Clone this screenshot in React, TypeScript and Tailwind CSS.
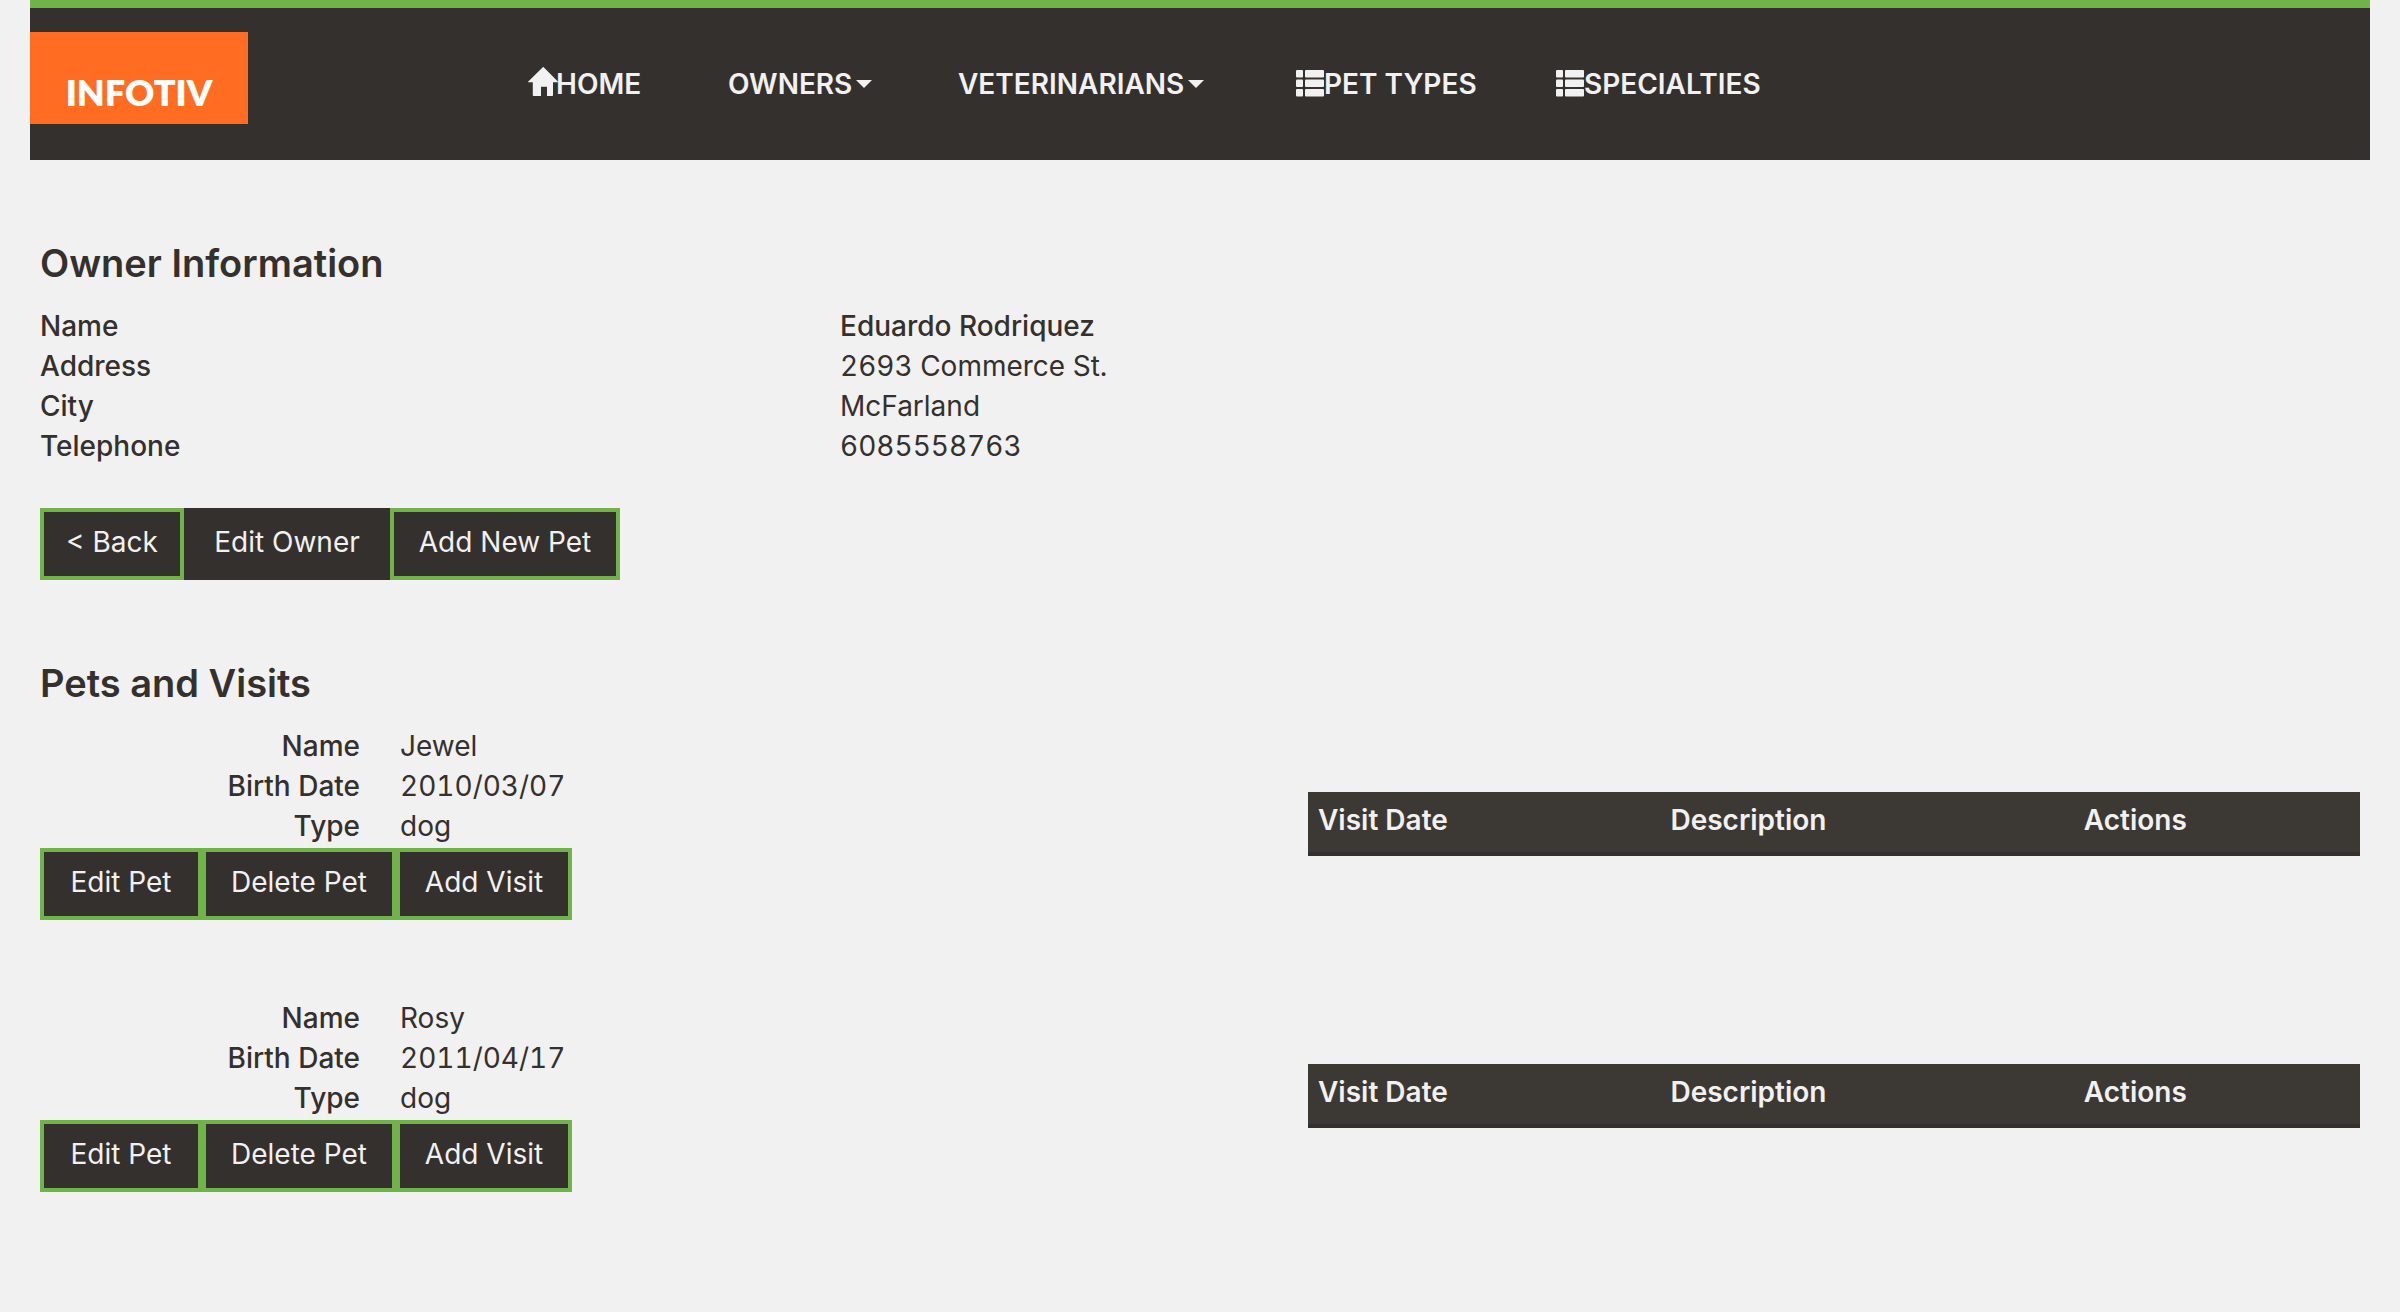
import type { ReactNode } from "react";

function HomeIcon() {
  return (
    <svg className="h-[34px] w-7 overflow-visible" viewBox="0 0 28 34" fill="currentColor" aria-hidden="true">
      <path d="M14.800.3c.3-.3.6-.3.900 0L29.800 14.400c.4.4.3.8-.3.800H25V28.300c0 .4-.3.700-.7.700H19V19.700H13V29H5.500c-.4 0-.7-.3-.7-.7V15.200H.6c-.6 0-.7-.4-.3-.8L14.800.3Z" />
    </svg>
  );
}

function ListIcon() {
  return (
    <svg className="h-7 w-7" viewBox="0 0 28 28" fill="currentColor" aria-hidden="true">
      {[0, 9.5, 19].map((y) => (
        <g key={y}>
          <rect x="0" y={y} width="7" height="7.5" rx="1" />
          <rect x="9" y={y} width="19" height="7.5" rx="1" />
        </g>
      ))}
    </svg>
  );
}

function Caret() {
  return (
    <svg className="ml-1 h-2 w-4" viewBox="0 0 16 8" fill="currentColor" aria-hidden="true">
      <path d="M0 0h16L8 8Z" />
    </svg>
  );
}

function NavLink({ icon, children }: { icon: ReactNode; children: ReactNode }) {
  return (
    <a href="#" className="flex items-center">
      {icon}
      {children}
    </a>
  );
}

function NavMenu({ children }: { children: ReactNode }) {
  return (
    <button type="button" className="flex items-center">
      {children}
      <Caret />
    </button>
  );
}

function Button({
  width,
  active = false,
  children,
}: {
  width: string;
  active?: boolean;
  children: ReactNode;
}) {
  return (
    <button
      type="button"
      className={
        "border-4 bg-[#34302d] pt-[10px] pb-[14px] text-[#f1f1f1] " +
        width +
        (active ? " border-[#34302d]" : " border-[#70b349]")
      }
    >
      {children}
    </button>
  );
}

const owner = [
  ["Name", "Eduardo Rodriquez"],
  ["Address", "2693 Commerce St."],
  ["City", "McFarland"],
  ["Telephone", "6085558763"],
];

const pets = [
  { name: "Jewel", birthDate: "2010/03/07", type: "dog" },
  { name: "Rosy", birthDate: "2011/04/17", type: "dog" },
];

function Pet({ name, birthDate, type }: { name: string; birthDate: string; type: string }) {
  const rows = [
    ["Name", name],
    ["Birth Date", birthDate],
    ["Type", type],
  ];
  return (
    <article className="grid grid-cols-[1268fr_1052fr]">
      <div>
        <dl className="mb-[2px] grid grid-cols-[320px_1fr] gap-x-10">
          {rows.map(([label, value]) => (
            <div key={label} className="contents">
              <dt className="text-right font-medium">{label}</dt>
              <dd className="tabular-nums">{value}</dd>
            </div>
          ))}
        </dl>
        <div className="flex">
          <Button width="w-[162px]">Edit Pet</Button>
          <Button width="w-[194px]">Delete Pet</Button>
          <Button width="w-[176px]">Add Visit</Button>
        </div>
      </div>
      <div className="pt-[66px]">
        <table className="w-full table-fixed bg-[#3c3833] text-left text-[#f1f1f1]">
          <thead>
            <tr className="border-b-4 border-[#34302d]">
              <th className="w-[33.5%] px-[10px] pt-2 pb-3 font-semibold">Visit Date</th>
              <th className="w-[39.3%] px-[10px] pt-2 pb-3 font-semibold">Description</th>
              <th className="px-[10px] pt-2 pb-3 font-semibold">Actions</th>
            </tr>
          </thead>
        </table>
      </div>
    </article>
  );
}

export default function App() {
  return (
    <div className="min-h-screen bg-[#f1f1f1] px-[30px] pb-20 font-['Inter',sans-serif] text-[28px] leading-10 text-[#34302d]">
      <header className="flex h-40 border-t-8 border-[#70b349] bg-[#34302d] text-[#f1f1f1]">
        <a
          href="#"
          className="mt-6 flex h-[92px] w-[218px] items-end justify-center bg-[#ff6c22] pb-3 font-['Lato',sans-serif] text-4xl font-extrabold text-white"
        >
          INFOTIV
        </a>
        <nav className="ml-[280px] grid h-[152px] grid-cols-[200px_230px_338px_260px_auto] items-center justify-items-start font-semibold">
          <NavLink icon={<HomeIcon />}>HOME</NavLink>
          <NavMenu>OWNERS</NavMenu>
          <NavMenu>VETERINARIANS</NavMenu>
          <NavLink icon={<ListIcon />}>PET TYPES</NavLink>
          <NavLink icon={<ListIcon />}>SPECIALTIES</NavLink>
        </nav>
      </header>

      <main className="px-[10px]">
        <section className="pt-20">
          <h2 className="mb-5 text-[38px] leading-[46px] font-semibold">Owner Information</h2>
          <table className="w-full table-fixed text-left">
            <tbody>
              {owner.map(([label, value]) => (
                <tr key={label}>
                  <th scope="row" className="w-[800px] p-0 font-medium">
                    {label}
                  </th>
                  <td className={label === "Name" ? "p-0 font-medium" : "p-0 tabular-nums"}>{value}</td>
                </tr>
              ))}
            </tbody>
          </table>
          <div className="mt-[42px] flex">
            <Button width="w-[144px]">&lt; Back</Button>
            <Button width="w-[206px]" active>
              Edit Owner
            </Button>
            <Button width="w-[230px]">Add New Pet</Button>
          </div>
        </section>

        <section className="pt-20">
          <h2 className="mb-5 text-[38px] leading-[46px] font-semibold">Pets and Visits</h2>
          <div className="flex flex-col gap-[78px]">
            {pets.map((pet) => (
              <Pet key={pet.name} {...pet} />
            ))}
          </div>
        </section>
      </main>
    </div>
  );
}
